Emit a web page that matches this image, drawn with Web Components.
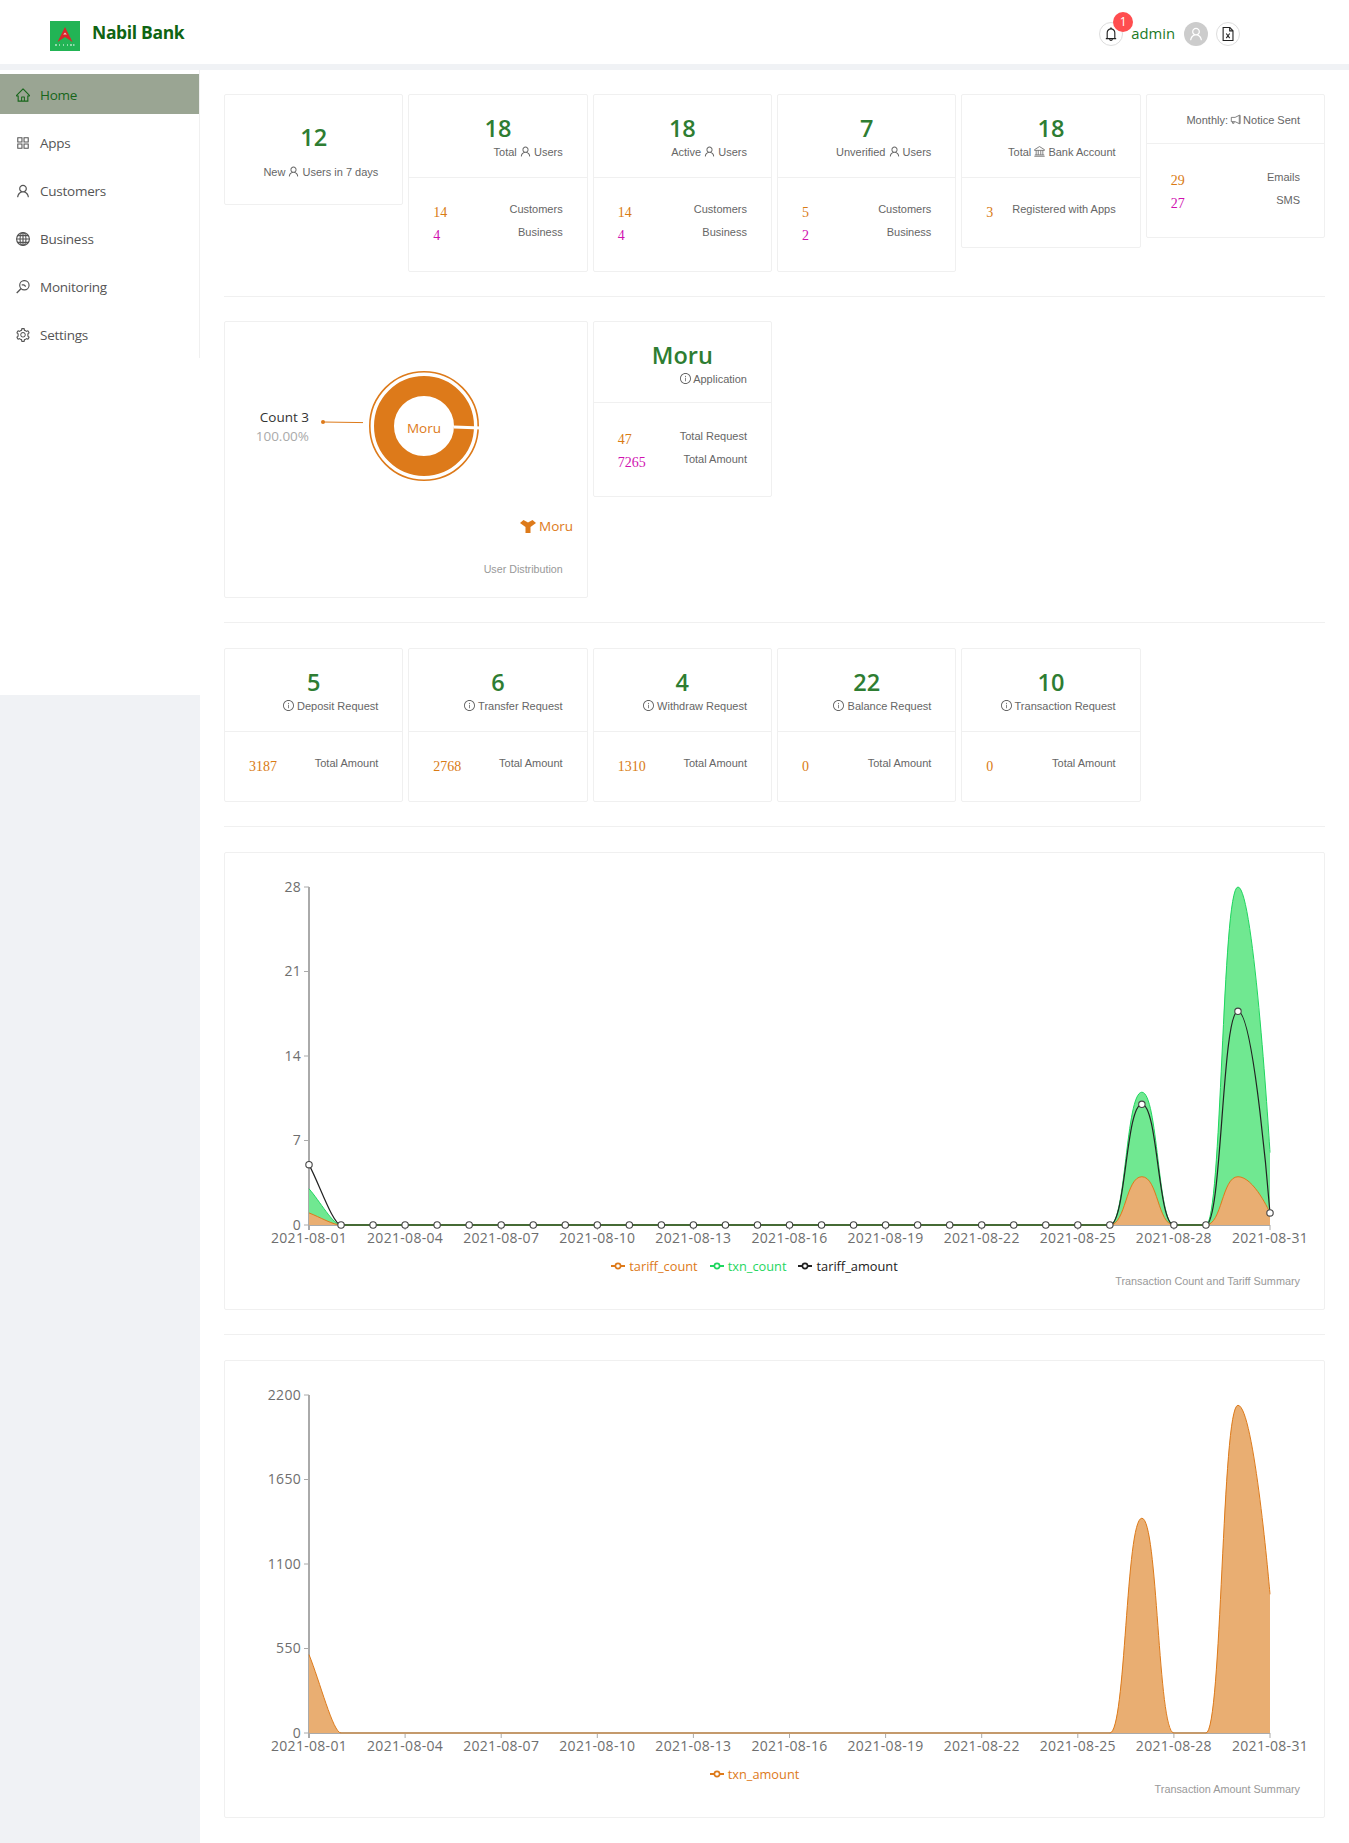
<!DOCTYPE html>
<html lang="en">
<head>
<meta charset="utf-8">
<title>Nabil Bank</title>
<style>
  html, body { margin: 0; padding: 0; background: #f0f2f5; }
  body { font-family: "Open Sans", "Liberation Sans", sans-serif; }
</style>
</head>
<body>
<nb-app>
  <nb-header slot="header" title="Nabil Bank" user="admin" count="1"></nb-header>
  <nb-sidebar slot="side">
    <nb-nav-item icon="home" active>Home</nb-nav-item>
    <nb-nav-item icon="apps">Apps</nb-nav-item>
    <nb-nav-item icon="user">Customers</nb-nav-item>
    <nb-nav-item icon="global">Business</nb-nav-item>
    <nb-nav-item icon="monitor">Monitoring</nb-nav-item>
    <nb-nav-item icon="setting">Settings</nb-nav-item>
  </nb-sidebar>

  <nb-grid>
    <nb-stat-card kind="plain" value="12">New <nb-icon name="user"></nb-icon> Users in 7 days</nb-stat-card>
    <nb-stat-card value="18">Total <nb-icon name="user"></nb-icon> Users
      <nb-stat-row slot="rows" value="14" label="Customers"></nb-stat-row>
      <nb-stat-row slot="rows" value="4" label="Business" tone="pink"></nb-stat-row>
    </nb-stat-card>
    <nb-stat-card value="18">Active <nb-icon name="user"></nb-icon> Users
      <nb-stat-row slot="rows" value="14" label="Customers"></nb-stat-row>
      <nb-stat-row slot="rows" value="4" label="Business" tone="pink"></nb-stat-row>
    </nb-stat-card>
    <nb-stat-card value="7">Unverified <nb-icon name="user"></nb-icon> Users
      <nb-stat-row slot="rows" value="5" label="Customers"></nb-stat-row>
      <nb-stat-row slot="rows" value="2" label="Business" tone="pink"></nb-stat-row>
    </nb-stat-card>
    <nb-stat-card value="18">Total <nb-icon name="bank"></nb-icon> Bank Account
      <nb-stat-row slot="rows" value="3" label="Registered with Apps"></nb-stat-row>
    </nb-stat-card>
    <nb-stat-card kind="notice">Monthly: <nb-icon name="notice" style="margin:0 -1px"></nb-icon> Notice Sent
      <nb-stat-row slot="rows" value="29" label="Emails"></nb-stat-row>
      <nb-stat-row slot="rows" value="27" label="SMS" tone="pink"></nb-stat-row>
    </nb-stat-card>
  </nb-grid>

  <nb-divider style="margin-bottom:24px"></nb-divider>

  <nb-grid style="height:277px">
    <nb-donut-card style="grid-column:span 2" name="Moru" count="3" percent="100.00%" caption="User Distribution"></nb-donut-card>
    <nb-stat-card kind="app" value="Moru"><nb-icon name="info"></nb-icon> Application
      <nb-stat-row slot="rows" value="47" label="Total Request"></nb-stat-row>
      <nb-stat-row slot="rows" value="7265" label="Total Amount" tone="pink"></nb-stat-row>
    </nb-stat-card>
  </nb-grid>

  <nb-divider></nb-divider>

  <nb-grid>
    <nb-stat-card value="5"><nb-icon name="info"></nb-icon> Deposit Request
      <nb-stat-row slot="rows" value="3187" label="Total Amount"></nb-stat-row>
    </nb-stat-card>
    <nb-stat-card value="6"><nb-icon name="info"></nb-icon> Transfer Request
      <nb-stat-row slot="rows" value="2768" label="Total Amount"></nb-stat-row>
    </nb-stat-card>
    <nb-stat-card value="4"><nb-icon name="info"></nb-icon> Withdraw Request
      <nb-stat-row slot="rows" value="1310" label="Total Amount"></nb-stat-row>
    </nb-stat-card>
    <nb-stat-card value="22"><nb-icon name="info"></nb-icon> Balance Request
      <nb-stat-row slot="rows" value="0" label="Total Amount"></nb-stat-row>
    </nb-stat-card>
    <nb-stat-card value="10"><nb-icon name="info"></nb-icon> Transaction Request
      <nb-stat-row slot="rows" value="0" label="Total Amount"></nb-stat-row>
    </nb-stat-card>
  </nb-grid>

  <nb-divider></nb-divider>

  <nb-line-chart id="countChart" caption="Transaction Count and Tariff Summary"></nb-line-chart>

  <nb-divider></nb-divider>

  <nb-line-chart id="amountChart" caption="Transaction Amount Summary"></nb-line-chart>
</nb-app>

<script>
const ICONS = {
  home: '<path fill="currentColor" d="M946.5 505L560.1 118.8l-25.9-25.9a31.5 31.5 0 0 0-44.4 0L77.5 505a63.9 63.9 0 0 0-18.8 46c.4 35.2 29.7 63.3 64.9 63.3h42.5V940h691.8V614.3h43.4c17.1 0 33.2-6.7 45.3-18.8a63.6 63.6 0 0 0 18.7-45.3c0-17-6.7-33.1-18.8-45.2zM568 868H456V664h112v204zm217.9-325.7V868H632V640c0-22.1-17.9-40-40-40H432c-22.1 0-40 17.9-40 40v228H238.1V542.3h-96l370-369.7 23.1 23.1L882 542.3h-96.1z"/>',
  apps: '<path fill="currentColor" d="M464 144H160c-8.8 0-16 7.2-16 16v304c0 8.8 7.2 16 16 16h304c8.8 0 16-7.2 16-16V160c0-8.8-7.2-16-16-16zm-52 268H212V212h200v200zm452-268H560c-8.8 0-16 7.2-16 16v304c0 8.8 7.2 16 16 16h304c8.8 0 16-7.2 16-16V160c0-8.8-7.2-16-16-16zm-52 268H612V212h200v200zM464 544H160c-8.8 0-16 7.2-16 16v304c0 8.8 7.2 16 16 16h304c8.8 0 16-7.2 16-16V560c0-8.8-7.2-16-16-16zm-52 268H212V612h200v200zm452-268H560c-8.8 0-16 7.2-16 16v304c0 8.8 7.2 16 16 16h304c8.8 0 16-7.2 16-16V560c0-8.8-7.2-16-16-16zm-52 268H612V612h200v200z"/>',
  user: '<path fill="currentColor" d="M858.5 763.6a374 374 0 0 0-80.6-119.5 375.63 375.63 0 0 0-119.5-80.6c-.4-.2-.8-.3-1.2-.5C719.5 518 760 444.7 760 362c0-137-111-248-248-248S264 225 264 362c0 82.7 40.5 156 102.8 201.1-.4.2-.8.3-1.2.5-44.8 18.9-85 46-119.5 80.6a375.63 375.63 0 0 0-80.6 119.5A371.7 371.7 0 0 0 136 901.8a8 8 0 0 0 8 8.2h60c4.4 0 7.9-3.5 8-7.8 2-77.2 33-149.5 87.8-204.3 56.7-56.7 132-87.9 212.2-87.9s155.5 31.2 212.2 87.9C779 752.7 810 825 812 902.2c.1 4.4 3.6 7.8 8 7.8h60a8 8 0 0 0 8-8.2c-1-47.8-10.9-94.3-29.5-138.2zM512 534c-45.9 0-89.1-17.9-121.6-50.4S340 407.9 340 362c0-45.9 17.9-89.1 50.4-121.6S466.1 190 512 190s89.1 17.9 121.6 50.4S684 316.1 684 362c0 45.9-17.9 89.1-50.4 121.6S557.9 534 512 534z"/>',
  global: '<g fill="none" stroke="currentColor" stroke-width="74"><circle cx="512" cy="512" r="410"/><ellipse cx="512" cy="512" rx="190" ry="410"/><path d="M512 102v820M102 512h820M160 300h704M160 724h704"/></g>',
  monitor: '<g fill="none" stroke="currentColor" stroke-width="74"><circle cx="600" cy="400" r="300"/><path d="M395 605L110 900" stroke-width="84"/><path d="M430 380h140l120 100"/></g>',
  setting: '<path fill="currentColor" d="M924.8 625.7l-65.5-56c3.1-19 4.7-38.4 4.7-57.8s-1.6-38.8-4.7-57.8l65.5-56a32.03 32.03 0 0 0 9.3-35.2l-.9-2.6a443.74 443.74 0 0 0-79.7-137.9l-1.8-2.1a32.12 32.12 0 0 0-35.1-9.5l-81.3 28.9c-30-24.6-63.5-44-99.7-57.6l-15.7-85a32.05 32.05 0 0 0-25.8-25.7l-2.7-.5c-52.1-9.4-106.9-9.4-159 0l-2.7.5a32.05 32.05 0 0 0-25.8 25.7l-15.8 85.4a351.86 351.86 0 0 0-99 57.4l-81.9-29.1a32 32 0 0 0-35.1 9.5l-1.8 2.1a446.02 446.02 0 0 0-79.7 137.9l-.9 2.6c-4.5 12.5-.8 26.5 9.3 35.2l66.3 56.6c-3.1 18.8-4.6 38-4.6 57.1 0 19.2 1.5 38.4 4.6 57.1L99 625.5a32.03 32.03 0 0 0-9.3 35.2l.9 2.6c18.1 50.4 44.9 96.9 79.7 137.9l1.8 2.1a32.12 32.12 0 0 0 35.1 9.5l81.9-29.1c29.8 24.5 63.1 43.9 99 57.4l15.8 85.4a32.05 32.05 0 0 0 25.8 25.7l2.7.5a449.4 449.4 0 0 0 159 0l2.7-.5a32.05 32.05 0 0 0 25.8-25.7l15.7-85a350 350 0 0 0 99.7-57.6l81.3 28.9a32 32 0 0 0 35.1-9.5l1.8-2.1c34.8-41.1 61.6-87.5 79.7-137.9l.9-2.6c4.5-12.3.8-26.3-9.3-35zM788.3 465.9c2.5 15.1 3.8 30.6 3.8 46.1s-1.3 31-3.8 46.1l-6.6 40.1 74.7 63.9a370.03 370.03 0 0 1-42.6 73.6L721 702.8l-31.4 25.8c-23.9 19.6-50.5 35-79.3 45.8l-38.1 14.3-17.9 97a377.5 377.5 0 0 1-85 0l-17.9-97.2-37.8-14.5c-28.5-10.8-55-26.2-78.7-45.7l-31.4-25.9-93.4 33.2c-17-22.9-31.2-47.6-42.6-73.6l75.5-64.5-6.5-40c-2.4-14.9-3.7-30.3-3.7-45.5 0-15.3 1.2-30.6 3.7-45.5l6.5-40-75.5-64.5c11.3-26.1 25.6-50.7 42.6-73.6l93.4 33.2 31.4-25.9c23.7-19.5 50.2-34.9 78.7-45.7l37.9-14.3 17.9-97.2c28.1-3.2 56.8-3.2 85 0l17.9 97 38.1 14.3c28.7 10.8 55.4 26.2 79.3 45.8l31.4 25.8 92.8-32.9c17 22.9 31.2 47.6 42.6 73.6L781.8 426l6.5 39.9zM512 326c-97.2 0-176 78.8-176 176s78.8 176 176 176 176-78.8 176-176-78.8-176-176-176zm79.2 255.2A111.6 111.6 0 0 1 512 614c-29.9 0-58-11.7-79.2-32.8A111.6 111.6 0 0 1 400 502c0-29.9 11.7-58 32.8-79.2C454 401.6 482.1 390 512 390c29.9 0 58 11.6 79.2 32.8A111.6 111.6 0 0 1 624 502c0 29.9-11.7 58-32.8 79.2z"/>',
  bell: '<path fill="currentColor" d="M816 768h-24V428c0-141.1-104.3-257.7-240-277.1V112c0-22.1-17.9-40-40-40s-40 17.9-40 40v38.9c-135.7 19.4-240 136-240 277.1v340h-24c-17.7 0-32 14.3-32 32v32c0 4.4 3.6 8 8 8h216c0 61.8 50.2 112 112 112s112-50.2 112-112h216c4.4 0 8-3.6 8-8v-32c0-17.7-14.3-32-32-32zM512 888c-26.5 0-48-21.5-48-48h96c0 26.5-21.5 48-48 48zM304 768V428c0-55.6 21.6-107.8 60.9-147.1S456.4 220 512 220c55.6 0 107.8 21.6 147.1 60.9S720 372.4 720 428v340H304z"/>',
  info: '<path fill="currentColor" d="M512 64C264.6 64 64 264.6 64 512s200.6 448 448 448 448-200.6 448-448S759.4 64 512 64zm0 820c-205.4 0-372-166.6-372-372s166.6-372 372-372 372 166.6 372 372-166.6 372-372 372z"/><path fill="currentColor" d="M464 336a48 48 0 1 0 96 0 48 48 0 1 0-96 0zm72 112h-48c-4.4 0-8 3.6-8 8v272c0 4.4 3.6 8 8 8h48c4.4 0 8-3.6 8-8V456c0-4.4-3.6-8-8-8z"/>',
  bank: '<g fill="none" stroke="currentColor" stroke-width="66"><path d="M512 110L110 360v60h804v-60z"/><path d="M240 420v360M410 420v360M614 420v360M784 420v360M130 790h764M90 900h844"/></g>',
  notice: '<g fill="none" stroke="currentColor" stroke-width="66" stroke-linejoin="round"><path d="M820 170v680L480 690H170V340h310z"/><path d="M270 690v130h120V700"/><path d="M820 170h70v680h-70"/></g>',
  excel: '<g fill="none" stroke="currentColor" stroke-width="70"><path d="M200 90h420l210 220v620H200z"/><path d="M620 90v220h210"/><path d="M400 480l220 300M620 480L400 780"/></g>'
};

// shared card frame, every card in the page has this border
const CARD_CSS = `
  box-sizing: border-box;
  background: #fff;
  border: 1px solid #f0f0f0;
  border-radius: 2px;
`;

class NbIcon extends HTMLElement {
  constructor() {
    super();
    this.attachShadow({mode: "open"});
  }
  connectedCallback() {
    const name = this.getAttribute("name");
    this.shadowRoot.innerHTML = `
      <style>
        :host { display: inline-block; width: 1em; height: 1em; vertical-align: -0.125em; line-height: 0; }
        svg { width: 100%; height: 100%; display: block; }
      </style>
      <svg viewBox="64 64 896 896" aria-hidden="true">${ICONS[name] || ""}</svg>`;
  }
}
customElements.define("nb-icon", NbIcon);

class NbApp extends HTMLElement {
  constructor() {
    super();
    this.attachShadow({mode: "open"}).innerHTML = `
      <style>
        :host { display: block; width: 1349px; }
        .body { display: flex; align-items: flex-start; margin-top: 6px; }
        .side { flex: 0 0 200px; }
        main { flex: 1; min-width: 0; background: #fff; padding: 24px 24px 25px; box-sizing: border-box; }
      </style>
      <slot name="header"></slot>
      <div class="body">
        <div class="side"><slot name="side"></slot></div>
        <main><slot></slot></main>
      </div>`;
  }
}
customElements.define("nb-app", NbApp);

class NbHeader extends HTMLElement {
  constructor() {
    super();
    this.attachShadow({mode: "open"});
  }
  connectedCallback() {
    this.shadowRoot.innerHTML = `
      <style>
        :host { display: flex; align-items: center; height: 64px; background: #fff; padding: 0 0 0 50px; box-sizing: border-box; }
        .logo { width: 30px; height: 30px; display: block; margin-top: 8px; }
        h1 { margin: 0 0 0 12px; font: 700 17.5px/24px "Open Sans", sans-serif; color: #0f6412; letter-spacing: -0.35px; }
        .tools { margin-left: auto; margin-right: 109px; display: flex; align-items: center; margin-top: 4px; }
        .round { width: 24px; height: 24px; box-sizing: border-box; border: 1px solid #ddd; border-radius: 50%; display: flex; align-items: center; justify-content: center; font-size: 14px; color: #222; position: relative; }
        .badge { position: absolute; top: -11px; left: 13px; width: 20px; height: 20px; border-radius: 50%; background: #ff4d4f; color: #fff; font: 12px/20px "Open Sans", sans-serif; text-align: center; }
        .user { margin-left: 8px; padding-bottom: 2px; font: 14.8px/22px "Open Sans", sans-serif; color: #1b7a1f; }
        .avatar { width: 24px; height: 24px; border-radius: 50%; background: #ccc; color: #fff; display: flex; align-items: center; justify-content: center; font-size: 14px; margin-left: 9px; }
        .file { margin-left: 8px; }
      </style>
      <svg class="logo" viewBox="0 0 30 30" aria-hidden="true">
        <rect width="30" height="30" fill="#22b455"/>
        <path d="M15 6L22.5 21L15 16L7.5 21Z" fill="#d9252a"/>
        <path d="M13.2 13.5h3.6L15 11.5Z" fill="#f4c9c9"/>
        <path d="M5 24h2M9 24h1M13 24h1M17 24h1M20 24h2M23 24h1.5" stroke="#fff" stroke-width="1.2"/>
      </svg>
      <h1>${this.getAttribute("title")}</h1>
      <div class="tools">
        <div class="round"><nb-icon name="bell"></nb-icon><span class="badge">${this.getAttribute("count")}</span></div>
        <span class="user">${this.getAttribute("user")}</span>
        <div class="avatar"><nb-icon name="user"></nb-icon></div>
        <div class="round file"><nb-icon name="excel"></nb-icon></div>
      </div>`;
  }
}
customElements.define("nb-header", NbHeader);

class NbSidebar extends HTMLElement {
  constructor() {
    super();
    this.attachShadow({mode: "open"}).innerHTML = `
      <style>
        :host { display: block; width: 200px; height: 625px; background: #fff; }
        nav { display: flex; flex-direction: column; gap: 8px; box-sizing: border-box; padding: 4px 0; border-right: 1px solid #f0f0f0; }
      </style>
      <nav><slot></slot></nav>`;
  }
}
customElements.define("nb-sidebar", NbSidebar);

class NbNavItem extends HTMLElement {
  constructor() {
    super();
    this.attachShadow({mode: "open"});
  }
  connectedCallback() {
    this.shadowRoot.innerHTML = `
      <style>
        :host { display: flex; align-items: center; gap: 10px; height: 40px; box-sizing: border-box; padding: 2px 0 0 16px; font: 13.5px/22px "Open Sans", sans-serif; letter-spacing: -0.25px; color: #555; }
        :host([active]) { background: #9aa593; color: #17651a; }
        nb-icon { font-size: 14px; }
      </style>
      <nb-icon name="${this.getAttribute("icon")}"></nb-icon><slot></slot>`;
  }
}
customElements.define("nb-nav-item", NbNavItem);

class NbGrid extends HTMLElement {
  constructor() {
    super();
    this.attachShadow({mode: "open"}).innerHTML = `
      <style>
        :host { display: grid; grid-template-columns: repeat(6, 1fr); column-gap: 5px; align-items: start; }
      </style>
      <slot></slot>`;
  }
}
customElements.define("nb-grid", NbGrid);

class NbDivider extends HTMLElement {
  constructor() {
    super();
    this.attachShadow({mode: "open"}).innerHTML = `
      <style>:host { display: block; height: 1px; background: #f0f0f0; margin: 24px 0 25px; }</style>`;
  }
}
customElements.define("nb-divider", NbDivider);

class NbStatCard extends HTMLElement {
  constructor() {
    super();
    this.attachShadow({mode: "open"});
  }
  connectedCallback() {
    const value = this.getAttribute("value");
    this.shadowRoot.innerHTML = `
      <style>
        :host { display: block; ${CARD_CSS} }
        .head { padding: 16px 24px 18px; border-bottom: 1px solid #f0f0f0; }
        .value { font: 600 23.5px/34px "Open Sans", sans-serif; color: #2e7d32; text-align: center; }
        .label { font: 11px/14px "Liberation Sans", Arial, sans-serif; color: #666; text-align: right; white-space: nowrap; }
        .rows { padding: 24px 24px 23px; }
        :host([kind=plain]) .head { padding: 25px 24px 25px; border-bottom: 0; }
        :host([kind=plain]) .value { margin-bottom: 11px; }
        :host([kind=plain]) .rows { display: none; }
        :host([kind=notice]) .head { padding: 18px 24px 16px; }
        :host([kind=notice]) .rows { padding: 26px 24px 21px; }
        :host([kind=app]) .head { padding-bottom: 16px; }
        :host([kind=app]) .rows { padding: 26px 24px 21px; }
        ::slotted(nb-icon) { font-size: 11px; }
        ::slotted(nb-stat-row:only-of-type) { height: 22px; }
      </style>
      <div class="head">
        ${value ? `<div class="value">${value}</div>` : ""}
        <div class="label"><slot></slot></div>
      </div>
      <div class="rows"><slot name="rows"></slot></div>`;
  }
}
customElements.define("nb-stat-card", NbStatCard);

class NbStatRow extends HTMLElement {
  constructor() {
    super();
    this.attachShadow({mode: "open"});
  }
  connectedCallback() {
    this.shadowRoot.innerHTML = `
      <style>
        :host { display: flex; justify-content: space-between; align-items: flex-start; height: 23px; }
        .num { font: 14px/21px "Liberation Serif", "Times New Roman", serif; color: #d97b14; }
        :host([tone=pink]) .num { color: #d011b0; }
        .txt { font: 11px/14px "Liberation Sans", Arial, sans-serif; color: #666; }
      </style>
      <span class="num">${this.getAttribute("value")}</span>
      <span class="txt">${this.getAttribute("label")}</span>`;
  }
}
customElements.define("nb-stat-row", NbStatRow);

class NbDonutCard extends HTMLElement {
  constructor() {
    super();
    this.attachShadow({mode: "open"});
  }
  connectedCallback() {
    const name = this.getAttribute("name");
    const orange = "#dd7a1a";
    this.shadowRoot.innerHTML = `
      <style>
        :host { display: block; height: 277px; ${CARD_CSS} }
        svg { display: block; width: 361px; height: 240px; }
        text { font-family: "Open Sans", sans-serif; font-size: 13.5px; }
        .cap { font: 10.7px/14px "Liberation Sans", Arial, sans-serif; color: #999; text-align: right; padding-right: 24px; }
      </style>
      <svg viewBox="0 0 361 240">
        <circle cx="199" cy="104" r="40" fill="none" stroke="${orange}" stroke-width="20"/>
        <circle cx="199" cy="104" r="54.2" fill="none" stroke="${orange}" stroke-width="1.6"/>
        <path d="M229 105L256 106" stroke="#fff" stroke-width="3"/>
        <text x="199" y="111" text-anchor="middle" fill="${orange}">${name}</text>
        <text x="84" y="100" text-anchor="end" fill="#333">Count ${this.getAttribute("count")}</text>
        <text x="84" y="119" text-anchor="end" fill="#aaa">${this.getAttribute("percent")}</text>
        <circle cx="98" cy="100" r="2" fill="${orange}"/>
        <path d="M98 100L138 100.6" stroke="${orange}" stroke-width="1"/>
        <path d="M295 201L298.5 198L303 200.5L307.5 198L311 201L305.5 205V211H300.5V205Z" fill="${orange}"/>
        <text x="314" y="209" fill="${orange}">${name}</text>
      </svg>
      <div class="cap">${this.getAttribute("caption")}</div>`;
  }
}
customElements.define("nb-donut-card", NbDonutCard);

function clamp(v, a, b) {
  return Math.max(Math.min(a, b), Math.min(v, Math.max(a, b)));
}

function smoothPath(pts, smooth) {
  const fmt = p => p[0].toFixed(2) + " " + p[1].toFixed(2);
  let d = "M" + fmt(pts[0]);
  const last = pts.length - 1;
  // first segment leaves almost straight
  let out = [pts[0][0] + (pts[1][0] - pts[0][0]) / 3, pts[0][1] + (pts[1][1] - pts[0][1]) / 3];
  for (let i = 1; i <= last; i++) {
    const [x, y] = pts[i];
    if (i === last) {
      d += "C" + fmt(out) + " " + fmt([x, y]) + " " + fmt([x, y]);
      break;
    }
    const prev = pts[i - 1], next = pts[i + 1];
    const vx = next[0] - prev[0], vy = next[1] - prev[1];
    const nx = clamp(x + vx * smooth * 0.5, x, next[0]);
    const ny = clamp(y + vy * smooth * 0.5, y, next[1]);
    let cx = clamp(x - (nx - x), prev[0], x);
    const cy = clamp(y - (ny - y), prev[1], y);
    const back = x - cx;
    if (i === 1) cx = x - back / 2;
    d += "C" + fmt(out) + " " + fmt([cx, cy]) + " " + fmt([x, y]);
    out = [x + back, y - (cy - y)];
  }
  return d;
}

function makeDays(overrides) {
  const out = new Array(31).fill(0);
  Object.keys(overrides).forEach(k => { out[k] = overrides[k]; });
  return out;
}

class NbLineChart extends HTMLElement {
  constructor() {
    super();
    this.attachShadow({mode: "open"});
  }
  set config(cfg) {
    this._cfg = cfg;
    this.render();
  }
  render() {
    const {yMax, series, baseColor, flat} = this._cfg;
    const x0 = 84, x1 = 1045, y0 = 372, yTop = 34;
    const xAt = i => x0 + (x1 - x0) * i / 30;
    const yAt = v => y0 - (y0 - yTop) * v / yMax;

    let axis = "";
    for (let i = 0; i <= 4; i++) {
      const v = yMax * i / 4, y = yAt(v);
      axis += `<path d="M${x0 - 5} ${y}H${x0}" class="ax"/><text x="${x0 - 8}" y="${y + 4.5}" text-anchor="end">${v}</text>`;
    }
    for (let i = 0; i <= 30; i += 3) {
      const x = xAt(i);
      const label = "2021-08-" + String(i + 1).padStart(2, "0");
      axis += `<path d="M${x} ${y0}v5" class="ax"/><text x="${x}" y="${y0 + 18}" text-anchor="middle">${label}</text>`;
    }

    // areas paint last series first, so orange stays on top of green
    let areas = "", lines = "", dots = "";
    series.slice().reverse().forEach(s => {
      const pts = s.data.map((v, i) => [xAt(i), yAt(v)]);
      const d = smoothPath(pts, 0.5);
      if (s.fill) areas += `<path d="${d}L${x1} ${y0}L${x0} ${y0}Z" fill="${s.fill}"/>`;
      if (!s.dots) lines += `<path d="${d}" fill="none" stroke="${s.color}" stroke-width="1"/>`;
    });
    series.filter(s => s.dots).forEach(s => {
      const pts = s.data.map((v, i) => [xAt(i), yAt(v)]);
      lines += `<path d="${smoothPath(pts, 0.5)}" fill="none" stroke="${s.color}" stroke-width="1.2"/>`;
      dots += pts.map(p => `<circle cx="${p[0]}" cy="${p[1]}" r="3.2" fill="#fff" stroke="#444" stroke-width="1.1"/>`).join("");
    });
    const base = flat.map(r => `M${xAt(r[0])} ${y0}H${xAt(r[1])}`).join("");

    const legend = series.map(s => `
      <span class="item" style="color:${s.color}">
        <svg width="14" height="8" viewBox="0 0 14 8"><path d="M0 4H14" stroke="${s.color}" stroke-width="2"/><circle cx="7" cy="4" r="2.6" fill="#fff" stroke="${s.color}" stroke-width="1.6"/></svg>
        ${s.name}
      </span>`).join("");

    this.shadowRoot.innerHTML = `
      <style>
        :host { display: block; height: 458px; ${CARD_CSS} }
        svg.plot { display: block; width: 1098px; height: 405px; }
        svg.plot text { font: 14px "Open Sans", sans-serif; letter-spacing: 0.3px; fill: #6e6e6e; }
        .ax { stroke: #aaa; stroke-width: 1; fill: none; }
        .legend { height: 16px; display: flex; justify-content: center; gap: 12px; padding-right: 40px; font: 12.8px/16px "Open Sans", sans-serif; }
        .item { display: inline-flex; align-items: center; gap: 4px; }
        .cap { font: 10.85px/14px "Liberation Sans", Arial, sans-serif; color: #999; text-align: right; padding-right: 24px; }
      </style>
      <svg class="plot" viewBox="0 0 1098 405">
        <path d="M${x0} ${yTop}V${y0 + 5}" stroke="#aaa" stroke-width="2" fill="none"/>
        <path d="M${x0} ${y0}H${x1}" stroke="#aaa" stroke-width="2" fill="none"/>
        ${axis}
        ${areas}
        ${lines}
        <path d="${base}" stroke="${baseColor}" stroke-width="2" fill="none"/>
        ${dots}
      </svg>
      <div class="legend">${legend}</div>
      <div class="cap">${this.getAttribute("caption")}</div>`;
  }
}
customElements.define("nb-line-chart", NbLineChart);

document.getElementById("countChart").config = {
  yMax: 28,
  baseColor: "#466b35",
  flat: [[1, 25], [27, 28]],
  series: [
    {name: "tariff_count", color: "#dd7a1a", fill: "#e9ae72", data: makeDays({0: 1, 26: 4, 29: 4, 30: 1})},
    {name: "txn_count", color: "#1fd65f", fill: "#70e891", data: makeDays({0: 3, 26: 11, 29: 28, 30: 6})},
    {name: "tariff_amount", color: "#222", dots: true, data: makeDays({0: 5, 26: 10, 29: 17.7, 30: 1})}
  ]
};
document.getElementById("amountChart").config = {
  yMax: 2200,
  baseColor: "#c49a6c",
  flat: [[1, 25], [27, 28]],
  series: [
    {name: "txn_amount", color: "#dd7a1a", fill: "#e9ae72", data: makeDays({0: 510, 26: 1398, 29: 2133, 30: 903})}
  ]
};
</script>
</body>
</html>
